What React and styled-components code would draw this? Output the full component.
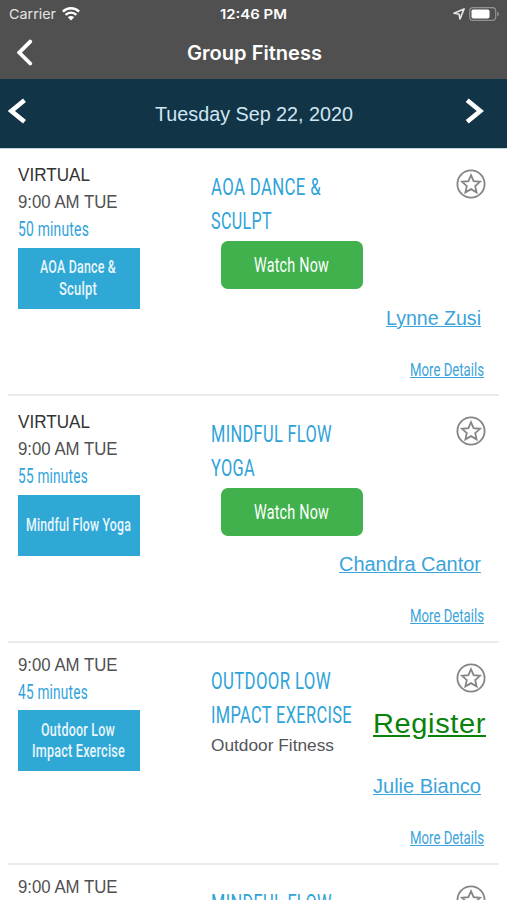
import React, { useLayoutEffect, useRef, useState } from "react";
import styled, { createGlobalStyle } from "styled-components";

const GlobalStyle = createGlobalStyle`
  * { box-sizing: border-box; }
  body {
    margin: 0;
    background: #fff;
    font-family: "Liberation Sans", Arial, sans-serif;
    overflow: hidden;
  }
`;

const classes = [
  {
    id: 1,
    height: 247,
    virtual: true,
    time: "9:00 AM TUE",
    duration: ["50 minutes", 71],
    tag: [["AOA Dance &", 76], ["Sculpt", 38]],
    title: [["AOA DANCE &", 110], ["SCULPT", 61]],
    watch: true,
    teacher: ["Lynne Zusi", 95],
  },
  {
    id: 2,
    height: 246.5,
    virtual: true,
    time: "9:00 AM TUE",
    duration: ["55 minutes", 70],
    tag: [["Mindful Flow Yoga", 105]],
    title: [["MINDFUL FLOW", 121], ["YOGA", 44]],
    watch: true,
    teacher: ["Chandra Cantor", 142],
  },
  {
    id: 3,
    height: 222,
    time: "9:00 AM TUE",
    duration: ["45 minutes", 70],
    tag: [["Outdoor Low", 74], ["Impact Exercise", 93]],
    title: [["OUTDOOR LOW", 120], ["IMPACT EXERCISE", 141]],
    location: "Outdoor Fitness",
    register: true,
    teacher: ["Julie Bianco", 108],
  },
  {
    id: 4,
    height: 246.5,
    time: "9:00 AM TUE",
    title: [["MINDFUL FLOW", 121]],
  },
];

// squeezes one line of text to a given width
const Fit = ({ width, children }) => {
  const ref = useRef(null);
  const [scale, setScale] = useState(1);
  useLayoutEffect(() => {
    const range = document.createRange();
    range.selectNodeContents(ref.current);
    ref.current.style.transform = "none";
    const natural = range.getBoundingClientRect().width;
    ref.current.style.transform = `scaleX(${width / natural})`;
    setScale(width / natural);
  }, [width, children]);
  return (
    <FitBox $width={width}>
      <FitText ref={ref} style={{ transform: `scaleX(${scale})` }}>
        {children}
      </FitText>
    </FitBox>
  );
};

const StarIcon = () => (
  <StarSvg viewBox='0 0 30 30'>
    <circle cx='15' cy='15' r='13.6' />
    <path d='M15 6.2l2.6 5.9 6.4.7-4.8 4.3 1.4 6.3-5.6-3.3-5.6 3.3 1.4-6.3L6 12.8l6.4-.7z' />
  </StarSvg>
);

const ClassRow = ({ item }) => (
  <Row $height={item.height}>
    <Schedule $virtual={item.virtual}>
      {item.virtual && <Virtual><Fit width={72}>VIRTUAL</Fit></Virtual>}
      <Time><Fit width={99.5}>{item.time}</Fit></Time>
      {item.duration && (
        <Duration><Fit width={item.duration[1]}>{item.duration[0]}</Fit></Duration>
      )}
      {item.tag && (
        <Tag>
          {item.tag.map(([text, width]) => (
            <Fit key={text} width={width}>{text}</Fit>
          ))}
        </Tag>
      )}
    </Schedule>
    <Details>
      <Title>
        {item.title.map(([text, width]) => (
          <Fit key={text} width={width}>{text}</Fit>
        ))}
      </Title>
      {item.watch && <WatchButton><Fit width={75}>Watch Now</Fit></WatchButton>}
      {item.location && <Location><Fit width={123}>{item.location}</Fit></Location>}
    </Details>
    <Actions>
      <StarIcon />
      {item.register && <Register><Fit width={113}>Register</Fit></Register>}
      {item.teacher && (
        <>
          <Teacher><Fit width={item.teacher[1]}>{item.teacher[0]}</Fit></Teacher>
          <More><Fit width={74}>More Details</Fit></More>
        </>
      )}
    </Actions>
  </Row>
);

const App = () => {
  return (
    <Screen>
      <GlobalStyle />
      <StatusBar>
        <Carrier>
          <Fit width={47}>Carrier</Fit>
          <svg width='18' height='14' viewBox='0 0 18 14' fill='none' stroke='#fff'>
            <path d='M.9 4.6a11.6 11.6 0 0 1 16.2 0' strokeWidth='2.4' />
            <path d='M3.6 7.9a7.6 7.6 0 0 1 10.8 0' strokeWidth='2.3' />
            <path d='M5.8 10.3a4.5 4.5 0 0 1 6.4 0L9 13.6z' fill='#fff' stroke='none' />
          </svg>
        </Carrier>
        <Clock><Fit width={67}>12:46 PM</Fit></Clock>
        <Indicators>
          <svg width='12' height='12' viewBox='0 0 12 12' fill='none' stroke='#e8e8e8' strokeWidth='1.6'>
            <path d='M11.1.9L7 11 6.1 6.2 1 5.3z' strokeLinejoin='round' />
          </svg>
          <svg width='31' height='14' viewBox='0 0 31 14'>
            <rect x='.7' y='.7' width='26' height='12.6' rx='3.4' fill='none' stroke='#929292' strokeWidth='1.2' />
            <rect x='2.5' y='2.4' width='18' height='9.2' rx='1.8' fill='#fff' />
            <path d='M28.3 4.7c2.2.8 2.2 3.8 0 4.6z' fill='#929292' />
          </svg>
        </Indicators>
      </StatusBar>
      <NavBar>
        <svg width='18' height='28' viewBox='0 0 18 28' fill='none' stroke='#fff' strokeWidth='3.8' strokeLinecap='round'>
          <path d='M13.2 3.6L2.2 14.6l11 10.9' />
        </svg>
        <NavTitle><Fit width={135}>Group Fitness</Fit></NavTitle>
      </NavBar>
      <DateBar>
        <svg width='20' height='28' viewBox='0 0 20 28' fill='none' stroke='#fff' strokeWidth='4.6'>
          <path d='M16.5 3.3L3.4 14l13.1 10.7' />
        </svg>
        <DateLabel><Fit width={198}>Tuesday Sep 22, 2020</Fit></DateLabel>
        <svg width='20' height='28' viewBox='0 0 20 28' fill='none' stroke='#fff' strokeWidth='4.6'>
          <path d='M2.2 3.3L15.3 14 2.2 24.7' />
        </svg>
      </DateBar>
      <List>
        {classes.map((item) => (
          <ClassRow key={item.id} item={item} />
        ))}
      </List>
    </Screen>
  );
};

const FitBox = styled.span`
  display: block;
  width: ${(props) => props.$width}px;
  white-space: nowrap;
`;
const FitText = styled.span`
  display: block;
  transform-origin: 0 50%;
`;
const Screen = styled.main`
  width: 507px;
  height: 900px;
  overflow: hidden;
  background: #fff;
`;
const StatusBar = styled.div`
  display: grid;
  grid-template-columns: 1fr 67px 1fr;
  align-items: center;
  height: 27px;
  padding: 0 7px 0 9px;
  background: #505050;
  color: #fff;
  font-family: Inter, sans-serif;
  font-size: 13.5px;
`;
const Carrier = styled.div`
  display: flex;
  align-items: center;
  gap: 6px;
  color: #e4e4e4;
`;
const Clock = styled.div`
  margin-left: -1px;
  font-weight: 600;
`;
const Indicators = styled.div`
  display: flex;
  justify-content: flex-end;
  align-items: center;
  gap: 4px;
`;
const NavBar = styled.header`
  display: grid;
  grid-template-columns: 170px 1fr;
  align-items: center;
  height: 52px;
  padding: 0 0 2px 17px;
  background: #505050;
`;
const NavTitle = styled.h1`
  margin: 0;
  padding-top: 1px;
  color: #fff;
  font-family: Inter, sans-serif;
  font-size: 19.5px;
  font-weight: 600;
`;
const DateBar = styled.div`
  display: grid;
  grid-template-columns: 147px 1fr 20px;
  align-items: center;
  height: 70px;
  padding: 0 22px 5px 8px;
  background: #123447;
  border-bottom: 1px solid #c3d3dc;
`;
const DateLabel = styled.div`
  padding-top: 7px;
  color: #cfe6f3;
  font-size: 19.5px;
`;
const List = styled.section`
  padding: 0 8px;
`;
const Row = styled.article`
  display: grid;
  grid-template-columns: 192.5px 152px minmax(0, 1fr);
  height: ${(props) => props.$height}px;
  padding: 0 13px 0 10px;
  border-bottom: 2px solid #ebebeb;
`;
const Schedule = styled.div`
  padding-top: ${(props) => (props.$virtual ? 13 : 9)}px;
`;
const Virtual = styled.div`
  color: #333;
  font-size: 18px;
  line-height: 27px;
`;
const Time = styled.div`
  color: #505050;
  font-size: 17.5px;
  line-height: 26px;
`;
const Duration = styled.div`
  padding-top: 1px;
  color: #2fa3d9;
  font-family: Roboto, sans-serif;
  font-size: 19.5px;
  font-weight: 400;
  letter-spacing: 0.3px;
  line-height: 28px;
`;
const Tag = styled.div`
  display: flex;
  flex-direction: column;
  align-items: center;
  justify-content: center;
  width: 122px;
  height: 61px;
  margin-top: 3.5px;
  padding: 0 2px 1px 0;
  background: #2fa8d5;
  color: #e9f6fc;
  font-family: Roboto, sans-serif;
  font-size: 18px;
  font-weight: 500;
  letter-spacing: 0.3px;
  line-height: 21.5px;
`;
const Details = styled.div`
  padding-top: 21px;
`;
const Title = styled.h2`
  margin: 0;
  color: #2fa3d9;
  font-family: Roboto, sans-serif;
  font-size: 24.5px;
  font-weight: 400;
  letter-spacing: 0.5px;
  line-height: 34.3px;
`;
const WatchButton = styled.button`
  display: flex;
  align-items: center;
  justify-content: center;
  width: 142px;
  height: 48px;
  margin: 2.5px 0 0 10px;
  padding: 0;
  border: 0;
  border-radius: 7px;
  background: #41b14d;
  color: #fff;
  font-family: Roboto, sans-serif;
  font-size: 21px;
  font-weight: 400;
  letter-spacing: 0.3px;
`;
const Location = styled.div`
  color: #555;
  font-size: 17px;
  line-height: 28px;
`;
const Actions = styled.div`
  display: flex;
  flex-direction: column;
  align-items: flex-end;
  padding-top: 20px;
`;
const StarSvg = styled.svg`
  flex: none;
  width: 30px;
  height: 30px;
  fill: none;
  stroke: #858585;
  stroke-width: 1.8;
`;
const Link = styled.div`
  color: #3ba4da;
  text-decoration: underline;
`;
const Register = styled(Link)`
  margin-top: 14px;
  color: #088208;
  font-size: 27.5px;
  letter-spacing: 0.6px;
  line-height: 34px;
`;
const Teacher = styled(Link)`
  margin: auto 5px 0 0;
  font-size: 19.5px;
  line-height: 24px;
`;
const More = styled(Link)`
  margin: 27px 2px 12.5px 0;
  font-family: Roboto, sans-serif;
  font-size: 19px;
  font-weight: 400;
  line-height: 25px;
  text-decoration-thickness: 1px;
`;

export default App;
